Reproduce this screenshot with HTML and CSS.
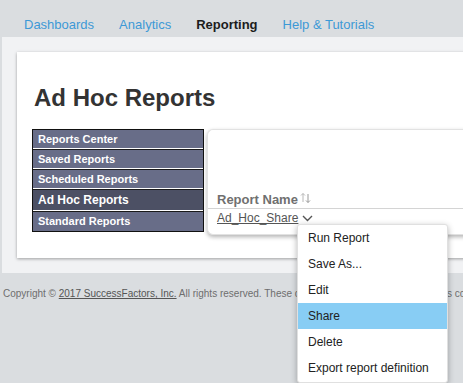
FILE: index.html
```html
<!DOCTYPE html>
<html lang="en">
<head>
  <meta charset="UTF-8">
  <title>Ad Hoc Reports</title>
  <link rel="stylesheet" href="styles.css">
</head>
<body>
  <nav class="topnav">
    <a href="#">Dashboards</a>
    <a href="#">Analytics</a>
    <a href="#" class="active">Reporting</a>
    <a href="#">Help &amp; Tutorials</a>
  </nav>

  <div class="panel">
    <div class="card">
      <h1>Ad Hoc Reports</h1>
      <div class="content">
        <ul class="side-menu">
          <li>Reports Center</li>
          <li>Saved Reports</li>
          <li>Scheduled Reports</li>
          <li class="current">Ad Hoc Reports</li>
          <li>Standard Reports</li>
        </ul>

        <div class="report-list">
          <div class="list-head">
            Report Name
            <svg class="sort-icon" width="11" height="12" viewBox="0 0 11 12">
              <path d="M3 10V1.5M1 3.5L3 1.5L5 3.5" fill="none" stroke="#b8b8b8" stroke-width="1"/>
              <path d="M8 2V10.5M6 8.5L8 10.5L10 8.5" fill="none" stroke="#999" stroke-width="1"/>
            </svg>
          </div>
          <div class="list-row">
            <a href="#" class="report-link">Ad_Hoc_Share</a>
            <svg class="chevron" width="11" height="7" viewBox="0 0 11 7">
              <polyline points="1,1 5.5,5.5 10,1" fill="none" stroke="#555" stroke-width="1.4"/>
            </svg>
            <ul class="action-menu">
              <li>Run Report</li>
              <li>Save As...</li>
              <li>Edit</li>
              <li class="selected">Share</li>
              <li>Delete</li>
              <li>Export report definition</li>
            </ul>
          </div>
        </div>
      </div>
    </div>
  </div>

  <footer class="copyright">
    Copyright &copy; <a href="#">2017 SuccessFactors, Inc.</a> All rights reserved. These online services are SuccessFactors confidential and proprietary and for use by authorized SuccessFactors customers only.
  </footer>
</body>
</html>
```

FILE: styles.css
```css
* {
  margin: 0;
  padding: 0;
  box-sizing: border-box;
}

html, body {
  overflow: hidden;
}

body {
  font-family: "Liberation Sans", Arial, sans-serif;
  background-color: #dadde0;
  color: #333;
  width: 463px;
  height: 383px;
}

.topnav {
  display: flex;
  gap: 25px;
  height: 37px;
  padding: 17px 0 0 24px;
  font-size: 13px;
  line-height: 15px;
  white-space: nowrap;
}

.topnav a {
  color: #3d99d6;
  text-decoration: none;
}

.topnav a.active {
  color: #1c1c1c;
  font-weight: bold;
}

.panel {
  margin-left: 2px;
  width: 700px;
  height: 236px;
  background-color: #f1f2f4;
  padding: 15px 0 0 15px;
}

.card {
  width: 680px;
  height: 206px;
  background-color: #fff;
  box-shadow: 0 1px 3px rgba(0, 0, 0, 0.35);
  padding: 32px 17px 0 15px;
}

.card h1 {
  font-size: 24px;
  line-height: 28px;
  font-weight: bold;
  color: #333;
  margin: 0 0 17px 2px;
}

.content {
  display: flex;
  align-items: flex-start;
  gap: 3px;
}

.side-menu {
  list-style: none;
  width: 172px;
  border: 1px solid #111;
  background-color: #111;
}

.side-menu li {
  height: 20px;
  line-height: 18px;
  padding-left: 5px;
  background-color: #686d88;
  border-bottom: 1px solid #fff;
  border-top: 1px solid #1a1a1a;
  color: #fff;
  font-size: 11px;
  font-weight: bold;
  white-space: nowrap;
}

.side-menu li:first-child {
  height: 19px;
  border-top: none;
}

.side-menu li:last-child {
  border-bottom: none;
}

.side-menu li.current {
  height: 22px;
  line-height: 20px;
  background-color: #4c5064;
  font-size: 12px;
}

.report-list {
  width: 300px;
  height: 106px;
  border: 1px solid #e2e2e2;
  border-right: none;
  border-radius: 6px 0 0 6px;
  box-shadow: 0 2px 4px rgba(0, 0, 0, 0.3);
  padding-top: 60px;
  background-color: #fff;
}

.list-head {
  display: flex;
  align-items: center;
  gap: 2px;
  height: 19px;
  padding-left: 9px;
  border-bottom: 1px solid #d4d4d4;
  font-size: 13px;
  font-weight: bold;
  color: #707070;
}

.sort-icon {
  margin-top: -3px;
}

.list-row {
  position: relative;
  display: flex;
  align-items: center;
  gap: 4px;
  height: 16px;
  margin-top: 1px;
  padding-left: 9px;
}

.report-link {
  font-size: 12px;
  color: #555;
  text-decoration: underline;
}

.chevron {
  margin-top: 1px;
}

.action-menu {
  position: absolute;
  top: 14px;
  left: 89px;
  width: 151px;
  list-style: none;
  background-color: #fff;
  border: 1px solid #e0e0e0;
  border-radius: 3px;
  box-shadow: 0 2px 6px rgba(0, 0, 0, 0.3);
  padding: 0 0 1px;
}

.action-menu li {
  height: 26px;
  line-height: 26px;
  padding-left: 10px;
  font-size: 12px;
  color: #222;
  white-space: nowrap;
}

.action-menu li.selected {
  background-color: #88cdf4;
}

.copyright {
  margin-top: 15px;
  padding-left: 3px;
  font-size: 10px;
  line-height: 12px;
  color: #6e6e6e;
  white-space: nowrap;
}

.copyright a {
  color: #555;
}
```
